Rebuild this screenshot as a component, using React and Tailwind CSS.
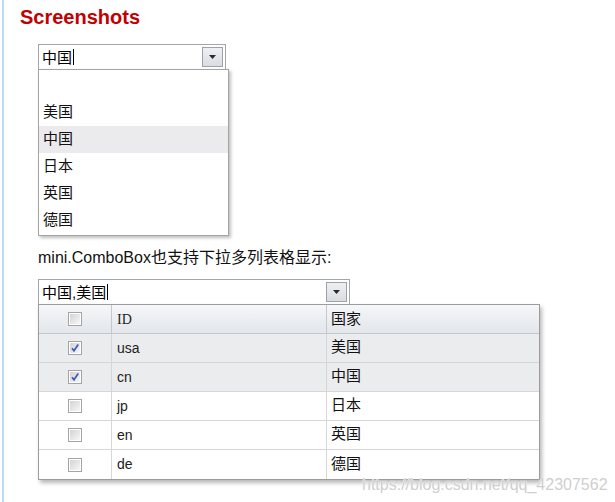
import React from "react";

const CJK = { fontFamily: '"Liberation Sans", "Noto Sans CJK SC", sans-serif' };

function Arrow() {
  return (
    <div className="mt-[2px] mr-[2px] w-[21px] h-[20px] border border-[#9ea2a8] bg-gradient-to-b from-[#eef0f3] to-[#d9dce2] flex items-center justify-center">
      <svg width="7" height="4" viewBox="0 0 7 4">
        <path d="M0 0 H7 L3.5 4 Z" fill="#2a2a2a" />
      </svg>
    </div>
  );
}

function Combo({ value, width }) {
  return (
    <div
      className="h-[26px] border border-[#a3a6ab] bg-white flex items-start justify-between"
      style={{ width }}
    >
      <div className="h-[24px] flex items-center pl-[3px] text-[15px] text-black leading-none">
        {value}
        <span className="ml-[1px] w-[1px] h-[16px] bg-black inline-block" />
      </div>
      <Arrow />
    </div>
  );
}

function Check({ checked }) {
  return (
    <div className="w-[14px] h-[14px] border border-[#a4a4a4] p-[1px] bg-white">
      <div className="w-full h-full bg-gradient-to-br from-[#d4d4d4] to-[#f6f6f6] flex items-center justify-center">
        {checked && (
          <svg width="10" height="10" viewBox="0 0 10 10">
            <path d="M2 5.2 L4 7.8 L8.2 1.5" fill="none" stroke="#3b5cb8" strokeWidth="1.7" />
          </svg>
        )}
      </div>
    </div>
  );
}

const rows = [
  { id: "usa", name: "美国", c: true },
  { id: "cn", name: "中国", c: true },
  { id: "jp", name: "日本", c: false },
  { id: "en", name: "英国", c: false },
  { id: "de", name: "德国", c: false },
];

export default function App() {
  return (
    <div className="relative w-[615px] h-[502px] bg-white overflow-hidden" style={CJK}>
      <div className="ml-[2px] border-l-2 border-[#bcdaf3] h-[502px] pl-[16px] pt-[5px]">
        <div
          className="text-[20px] leading-[24px] font-bold text-[#c30000]"
          style={{ fontFamily: '"Liberation Sans", Arial, sans-serif' }}
        >
          Screenshots
        </div>

        <div className="ml-[18px] mt-[15px]">
          <Combo value="中国" width={188} />
          <div className="w-[191px] h-[167px] -mt-[1px] border border-[#a4a4a4] bg-white shadow-[2px_2px_3px_rgba(0,0,0,0.25)] pt-[2px]">
            {["", "美国", "中国", "日本", "英国", "德国"].map((t, i) => (
              <div
                key={i}
                className={`h-[27px] flex items-center pl-[4px] text-[15px] text-[#111] ${
                  i === 2 ? "bg-[#ebebee]" : ""
                }`}
              >
                {t}
              </div>
            ))}
          </div>

          <div className="mt-[12px] h-[20px] flex items-center text-[#111] whitespace-nowrap">
            <span className="text-[16px]">mini.ComboBox</span>
            <span className="text-[16px]">也支持下拉多列表格显示:</span>
          </div>

          <div className="mt-[11px]">
            <Combo value="中国,美国" width={312} />
            <div className="w-[502px] -mt-[1px] border border-[#9c9c9c] bg-white shadow-[2px_3px_4px_rgba(0,0,0,0.28)]">
              <div className="grid grid-cols-[73px_215px_1fr] h-[29px] bg-gradient-to-b from-[#f5f7f9] to-[#e3e6ea] border-b border-[#c4c7cc]">
                <div className="flex items-center justify-center border-r border-[#c4c7cc]">
                  <Check checked={false} />
                </div>
                <div
                  className="flex items-center pl-[5px] text-[14px] text-[#222] border-r border-[#c4c7cc]"
                  style={{ fontFamily: '"Liberation Serif", serif' }}
                >
                  ID
                </div>
                <div className="flex items-center pl-[4px] text-[15px] text-[#111]">国家</div>
              </div>
              {rows.map((r, i) => (
                <div
                  key={r.id}
                  className={`grid grid-cols-[73px_215px_1fr] h-[29px] ${
                    i < rows.length - 1 ? "border-b border-[#d6d6d6]" : ""
                  } ${r.c ? "bg-[#ebecee]" : "bg-white"}`}
                >
                  <div className="flex items-center justify-center border-r border-[#d6d6d6]">
                    <Check checked={r.c} />
                  </div>
                  <div className="flex items-center pl-[5px] text-[14px] text-[#222] border-r border-[#d6d6d6]">
                    {r.id}
                  </div>
                  <div className="flex items-center pl-[4px] text-[15px] text-[#111] -mt-[1px]">{r.name}</div>
                </div>
              ))}
            </div>
          </div>
        </div>
      </div>

      <div
        className="absolute left-[362px] top-[473px] text-[16px] text-[#cfcfcf] whitespace-nowrap"
        style={{
          fontFamily: '"Liberation Sans", Arial, sans-serif',
          textShadow: "0 0 1px #fff, 0 0 1px #fff",
        }}
      >
        https://blog.csdn.net/qq_42307562
      </div>
    </div>
  );
}
